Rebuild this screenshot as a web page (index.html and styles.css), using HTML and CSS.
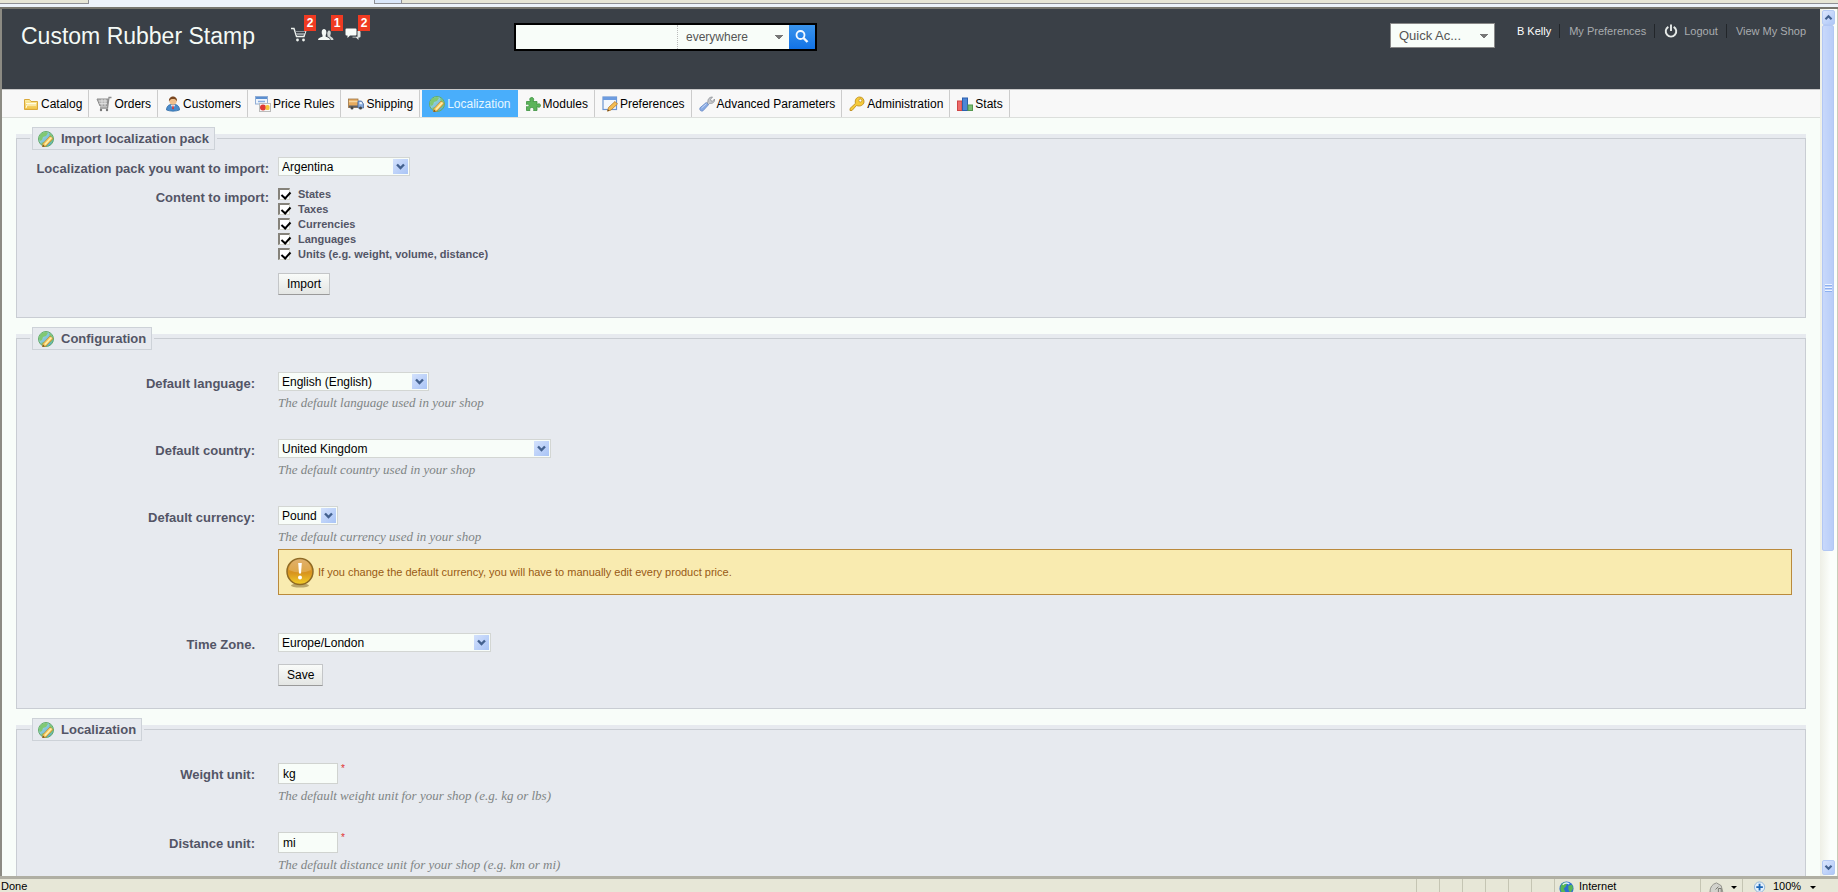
FILE: index.html
```html
<!DOCTYPE html>
<html lang="en">
<head>
<meta charset="utf-8">
<title>Localization - Custom Rubber Stamp</title>
<link rel="stylesheet" href="styles.css">
</head>
<body>
<svg class="sprite" aria-hidden="true">
  <defs>
    <linearGradient id="gGlobe" x1="0" y1="0" x2="1" y2="1"><stop offset="0" stop-color="#b4e2ea"/><stop offset="1" stop-color="#4aa3c4"/></linearGradient>
    <linearGradient id="gFolder" x1="0" y1="0" x2="0" y2="1"><stop offset="0" stop-color="#fdf0a8"/><stop offset="1" stop-color="#f0c040"/></linearGradient>
    <linearGradient id="gWarn" x1="0" y1="0" x2="0" y2="1"><stop offset="0" stop-color="#d9a04e"/><stop offset=".55" stop-color="#d8931d"/><stop offset="1" stop-color="#f3cf2a"/></linearGradient>
  </defs>
  <symbol id="globe" viewBox="0 0 16 16">
    <circle cx="8" cy="8" r="7.500" fill="url(#gGlobe)" stroke="#64ad68" stroke-width="1"/>
    <path d="M1 8C1 4 4 1 8 1l2 1-2 3-3 1-1 3-2 1zM11 2c2 1 4 3 4 6l-2 4-3-3 2-3zM3 12l3-1 2 4c-2 0-4-1-5-3z" fill="#80c872"/>
    <path d="M5 12.500l7-7.500 3 2.500-7 7.500-3.500 1z" fill="#f8cd60" stroke="#b9802c" stroke-width=".7"/>
    <path d="M7 13.500L13.500 6.500" stroke="#fff0b0" stroke-width="1.200"/><path d="M4.500 16l.7-2.300 1.600 1.500z" fill="#6b4a20"/>
  </symbol>
  <symbol id="folder" viewBox="0 0 16 16"><path d="M1.500 13.500v-10h5l1.500 2h6.500v8z" fill="url(#gFolder)" stroke="#d9a83a"/><path d="M3 7.500h10M3 12l1-3h9" stroke="#fffbe0" fill="none"/></symbol>
  <symbol id="cart" viewBox="0 0 16 16"><path d="M1 3h11l-1 7H4z" fill="#b5b5b5" stroke="#8a8a8a"/><path d="M15.500 1.500H13L11.500 12H4" fill="none" stroke="#8d8d8d" stroke-width="1.300"/><path d="M3 5h8M3.500 7.500h7.500M6 3v7M9 3v7" stroke="#e4e4e4" stroke-width=".8"/><circle cx="5" cy="14" r="1.200" fill="#777"/><circle cx="11" cy="14" r="1.200" fill="#777"/></symbol>
  <symbol id="person" viewBox="0 0 16 16"><path d="M1.500 14c0-3 1.500-5 4-5.500h5c2.500.5 4 2.500 4 5.500-4 1.500-9 1.500-13 0z" fill="#4a8ccc" stroke="#2f6aa5" stroke-width=".8"/><path d="M6 9l2 4 2-4z" fill="#fff"/><path d="M7.500 9.500h1l.5 3-1 1-1-1z" fill="#c33"/><circle cx="8" cy="5" r="3.700" fill="#f1c08c"/><path d="M4 5.500C3.500 2 6 .5 8 .5s4.500 1.500 4 5c-1-2-2-2.500-4-2.500S5 3.500 4 5.500z" fill="#7a4720"/></symbol>
  <symbol id="price" viewBox="0 0 16 16"><rect x=".5" y=".5" width="12" height="7.500" fill="#f0f5fb" stroke="#91aed6"/><rect x="1" y="1" width="11" height="2" fill="#5b8fd0"/><path d="M3 5.500h7" stroke="#8aaee0" stroke-width="1.500"/><rect x="4.500" y="7.500" width="11" height="8" fill="#f7f7f7" stroke="#bbb"/><circle cx="8" cy="11.500" r="3" fill="#e03a35"/><rect x="10.500" y="9" width="4" height="5" rx="1.500" fill="#f5c53a"/></symbol>
  <symbol id="truck" viewBox="0 0 16 16"><rect x=".5" y="3" width="9.500" height="8.500" fill="#e8ab5e" stroke="#9b7445" stroke-width=".8"/><path d="M1 5.500h9" stroke="#f6d6a0" stroke-width="1.500"/><path d="M1 9.500h9v2H1z" fill="#5d5f66"/><path d="M10 5h3.500l2 3v4H10z" fill="#85a9dc" stroke="#4c6c9e" stroke-width=".8"/><path d="M11.500 6h2l1 2.300h-3z" fill="#e9f2fc"/><circle cx="4" cy="12" r="1.500" fill="#444"/><circle cx="12.500" cy="12" r="1.500" fill="#444"/></symbol>
  <symbol id="puzzle" viewBox="0 0 16 16"><path d="M1.500 5.500h4C4 3 5 1.500 6.700 1.500S9.500 3 8 5.500h4v3c2-1.500 3.500-.5 3.500 1s-1.500 2.500-3.500 1v4H8.500c1-2-.3-3-1.800-3s-2.500 1-1.700 3H1.500v-4c2 .8 2.500-.5 2.500-1.300S3 7.800 1.500 8.500z" fill="#5bb45a" stroke="#3d9140" stroke-width=".8"/></symbol>
  <symbol id="prefs" viewBox="0 0 16 16"><rect x="1" y="1" width="13.500" height="12.500" fill="#f3f7fd" stroke="#6d95d1" stroke-width="1.200"/><path d="M1 1h13.500v3H1z" fill="#6d9ce0"/><path d="M5.500 15.200l1-3.700 6.500-6 2.500 2.500-6.500 6z" fill="#f4bc51" stroke="#b4782a" stroke-width=".8"/><path d="M5.500 15.200l.5-1.800 1.300 1.200z" fill="#5c3a16"/></symbol>
  <symbol id="wrench" viewBox="0 0 16 16"><path d="M9 6c-.5-3 1.500-5 4.500-5L11.500 3.300l.5 1.500 1.500.5L15.500 3c.5 3-2 5-4.800 4.300L9.500 8.500 7.800 6.800z" fill="#c7c9cd" stroke="#8c8f95" stroke-width=".8"/><path d="M7.300 6.500l2.200 2.300L4 14.800c-1.800 1-4-.8-3-3z" fill="#89abe4" stroke="#6586c4" stroke-width=".8"/><path d="M2.500 12l5-4.300" stroke="#c6d8f7"/></symbol>
  <symbol id="key" viewBox="0 0 16 16"><path d="M7.500 9.500l-4.500 5H1v-2l5.500-5.200C5.500 4 7.500 1 10.500 1S15.200 3.200 15 6s-3.500 5-7.500 3.500z" fill="#f5ca3a" stroke="#bf9020" stroke-width=".9"/><circle cx="11.300" cy="4.500" r="1.500" fill="#fff" stroke="#bf9020" stroke-width=".8"/></symbol>
  <symbol id="stats" viewBox="0 0 16 16"><rect x=".5" y="5" width="4.500" height="9.500" fill="#ec6a6a" stroke="#cf4545"/><rect x="5.500" y="2" width="5" height="12.500" fill="#4e86d6" stroke="#2c60ae"/><rect x="11" y="9" width="4.500" height="5.500" fill="#7bc074" stroke="#55984f"/></symbol>
  <symbol id="chev" viewBox="0 0 15 15"><path d="M4 5.500l3.500 3.500L11 5.500" fill="none" stroke="#43618f" stroke-width="2.400"/></symbol>
</svg>

<div class="tabstrip"><span class="tab tab-first"></span><span class="tab-gap"></span><span class="tab-active"></span><span class="tab tab-rest"></span></div>

<div class="window">
  <div class="page">
    <header class="header">
      <h1 class="shop-name">Custom Rubber Stamp</h1>
      <div class="notifs">
        <button class="notif" type="button" aria-label="New orders"><svg viewBox="0 0 16 16"><path d="M0 1.500h3l2.500 8H13l2-6.500" fill="none" stroke="#eef2ef" stroke-width="1.400"/><path d="M4.500 4h10L13 8H5.500z" fill="#8f959a"/><path d="M5 5.500h9" stroke="#3a4047"/><circle cx="6.500" cy="13" r="1.400" fill="#eef2ef"/><circle cx="12.500" cy="13" r="1.400" fill="#eef2ef"/></svg><span class="badge">2</span></button>
        <button class="notif" type="button" aria-label="New customers"><svg viewBox="0 0 16 16"><path d="M0 13c0-2 2-2.500 4.500-3.300V8C3.200 6 3.500 2 6 2s3 4 1.700 6v1.700C10 10.500 12 11 12 13z" fill="#f4f8f5"/><path d="M9.500 8.500C9 6 9.500 3.500 11.200 3.500s2 3 1 5.200c0 1.300 3.300 1.300 3.300 4.300h-2.800c0-2-1.700-3-3.200-3.500z" fill="#d5dad8"/></svg><span class="badge">1</span></button>
        <button class="notif" type="button" aria-label="New messages"><svg viewBox="0 0 16 16"><path d="M1.500 1.500h9q1 0 1 1v5q0 1-1 1H5L2.500 11V8.500h-1q-1 0-1-1v-5q0-1 1-1z" fill="#f8fcf9"/><path d="M12.500 4h2q1 0 1 1v4.500q0 1-1 1h-1V13l-2.500-2.500H7.500V9.700h5z" fill="#e2e6e4"/></svg><span class="badge">2</span></button>
      </div>
      <form class="search">
        <input class="search-text" type="text" aria-label="Search">
        <select class="search-scope" aria-label="Search in"><option>everywhere</option></select>
        <button class="search-go" type="button" aria-label="Search"><svg viewBox="0 0 16 16"><circle cx="6.500" cy="6" r="4" fill="none" stroke="#f4faff" stroke-width="1.800"/><path d="M9.500 9l4 4" stroke="#f4faff" stroke-width="2.400"/></svg></button>
      </form>
      <select class="quick" aria-label="Quick Access"><option>Quick Ac...</option></select>
      <nav class="user">
        <span class="user-name">B Kelly</span>
        <a href="#">My Preferences</a>
        <a href="#"><svg class="power" viewBox="0 0 16 16"><path d="M5 3.200a6 6 0 1 0 6 0" fill="none" stroke="#e6eae8" stroke-width="2.200"/><path d="M8 .5V8" stroke="#e6eae8" stroke-width="2.200"/></svg>Logout</a>
        <a href="#">View My Shop</a>
      </nav>
    </header>

    <nav class="menu">
      <a href="#"><svg><use href="#folder"/></svg>Catalog</a>
      <a href="#"><svg><use href="#cart"/></svg>Orders</a>
      <a href="#"><svg><use href="#person"/></svg>Customers</a>
      <a href="#"><svg><use href="#price"/></svg>Price Rules</a>
      <a href="#"><svg><use href="#truck"/></svg>Shipping</a>
      <a href="#" class="current"><svg><use href="#globe"/></svg>Localization</a>
      <a href="#"><svg><use href="#puzzle"/></svg>Modules</a>
      <a href="#"><svg><use href="#prefs"/></svg>Preferences</a>
      <a href="#"><svg><use href="#wrench"/></svg>Advanced Parameters</a>
      <a href="#"><svg><use href="#key"/></svg>Administration</a>
      <a href="#"><svg><use href="#stats"/></svg>Stats</a>
    </nav>

    <main class="content">
      <fieldset class="panel panel-tight">
        <legend><span class="legend"><svg><use href="#globe"/></svg>Import localization pack</span></legend>
        <div class="row">
          <label class="label" for="pack">Localization pack you want to import:</label>
          <div class="field"><span class="drop drop-pack"><select id="pack"><option>Argentina</option></select><svg><use href="#chev"/></svg></span></div>
        </div>
        <div class="row">
          <span class="label" id="content-label">Content to import:</span>
          <div class="field checks" role="group" aria-labelledby="content-label">
            <label class="check"><input type="checkbox" checked>States</label>
            <label class="check"><input type="checkbox" checked>Taxes</label>
            <label class="check"><input type="checkbox" checked>Currencies</label>
            <label class="check"><input type="checkbox" checked>Languages</label>
            <label class="check"><input type="checkbox" checked>Units (e.g. weight, volume, distance)</label>
          </div>
        </div>
        <div class="actions"><button class="btn" type="button">Import</button></div>
      </fieldset>

      <fieldset class="panel">
        <legend><span class="legend"><svg><use href="#globe"/></svg>Configuration</span></legend>
        <div class="row">
          <label class="label" for="lang">Default language:</label>
          <div class="field"><span class="drop drop-lang"><select id="lang"><option>English (English)</option></select><svg><use href="#chev"/></svg></span><p class="help">The default language used in your shop</p></div>
        </div>
        <div class="row">
          <label class="label" for="country">Default country:</label>
          <div class="field"><span class="drop drop-country"><select id="country"><option>United Kingdom</option></select><svg><use href="#chev"/></svg></span><p class="help">The default country used in your shop</p></div>
        </div>
        <div class="row">
          <label class="label" for="currency">Default currency:</label>
          <div class="field"><span class="drop drop-currency"><select id="currency"><option>Pound</option></select><svg><use href="#chev"/></svg></span><p class="help">The default currency used in your shop</p>
            <div class="warn"><svg viewBox="0 0 28 32"><ellipse cx="14" cy="29.500" rx="9" ry="2" fill="#b9a66c"/><circle cx="14" cy="15.500" r="13" fill="url(#gWarn)" stroke="#8f6a25" stroke-width="1.500"/><path d="M3 14a11 11 0 0 1 22 0q-11 5-22 0z" fill="#fff" opacity=".18"/><path d="M12.200 7h3.600l-.8 10.500h-2z" fill="#fff"/><circle cx="14" cy="21.500" r="2" fill="#fff"/></svg>If you change the default currency, you will have to manually edit every product price.</div>
          </div>
        </div>
        <div class="row">
          <label class="label" for="tz">Time Zone.</label>
          <div class="field"><span class="drop drop-tz"><select id="tz"><option>Europe/London</option></select><svg><use href="#chev"/></svg></span></div>
        </div>
        <div class="actions"><button class="btn" type="button">Save</button></div>
      </fieldset>

      <fieldset class="panel">
        <legend><span class="legend"><svg><use href="#globe"/></svg>Localization</span></legend>
        <div class="row">
          <label class="label" for="weight">Weight unit:</label>
          <div class="field"><div class="unit"><input id="weight" type="text" value="kg"><sup>*</sup></div><p class="help">The default weight unit for your shop (e.g. kg or lbs)</p></div>
        </div>
        <div class="row">
          <label class="label" for="distance">Distance unit:</label>
          <div class="field"><div class="unit"><input id="distance" type="text" value="mi"><sup>*</sup></div><p class="help">The default distance unit for your shop (e.g. km or mi)</p></div>
        </div>
      </fieldset>
    </main>
  </div>
  <div class="scroll">
    <button class="scroll-btn up" type="button" aria-label="Scroll up"><svg><use href="#chev"/></svg></button>
    <div class="scroll-track"><div class="thumb"><span class="grip"></span></div></div>
    <button class="scroll-btn" type="button" aria-label="Scroll down"><svg><use href="#chev"/></svg></button>
  </div>
</div>

<footer class="status">
  <span class="status-text">Done</span>
  <span class="cell"></span><span class="cell"></span><span class="cell"></span><span class="cell"></span><span class="cell"></span><span class="cell"></span>
  <span class="cell cell-zone"><svg viewBox="0 0 16 16"><circle cx="8" cy="8" r="7.500" fill="#2b6fd0"/><path d="M2 5c2-4 5-4 7-3L7 6 5 8l2 4-2 2C1 11 1 8 2 5zM10 5l4-1 1 4-3 5-2-4z" fill="#58b653"/><path d="M4 4q3-3 7-1" stroke="#dff0ff" stroke-width="1.500" fill="none"/></svg>Internet</span>
  <span class="cell cell-priv"><svg viewBox="0 0 16 16"><path d="M1 12q0-8 7-10l5 3 2 8H8z" fill="#d2d2cc" stroke="#8f8f88"/><path d="M7 9l3-3M10 12V8h3v4" stroke="#77776f" fill="none"/></svg><span class="caret"></span></span>
  <span class="cell cell-zoom"><svg viewBox="0 0 16 16"><circle cx="7" cy="6.500" r="5.500" fill="#e4f0fb" stroke="#8fb4d8"/><path d="M7 3v7M3.500 6.500h7" stroke="#1c67b8" stroke-width="2"/></svg>100%<span class="caret"></span></span>
</footer>
</body>
</html>
```
FILE: styles.css
```css
* { box-sizing: border-box; }

body {
  margin: 0;
  height: 100vh;
  display: flex;
  flex-direction: column;
  overflow: hidden;
  background: #f8fdf9;
  font-family: "Liberation Sans", Arial, sans-serif;
  font-size: 12px;
  color: #000;
}

button, input, select { font: inherit; color: inherit; margin: 0; border-radius: 0; }
a { color: inherit; text-decoration: none; }
.sprite { position: absolute; width: 0; height: 0; }

/* Browser tab strip */
.tabstrip {
  flex: none;
  display: flex;
  height: 9px;
  padding-bottom: 3px;
  background: #edf3fa;
  border-bottom: 2px solid #77766e;
}
.tab { background: #e7e6d6; border-bottom: 1px solid #8f9095; }
.tab-first { width: 89px; border-right: 1px solid #8f9095; }
.tab-gap { width: 285px; }
.tab-active { width: 28px; background: #dbe8fa; border: solid #8f9095; border-width: 0 1px 1px; }
.tab-rest { flex: 1; }

.window { flex: 1; min-height: 0; display: flex; border-left: 2px solid #8c8b83; }
.page { flex: 1; min-width: 0; overflow: hidden; }

/* Shop header */
.header {
  display: flex;
  align-items: flex-start;
  height: 80px;
  padding: 14px 14px 0 19px;
  background: #3a4047;
  color: #f4faf6;
}
.shop-name { margin: 0; width: 270px; font-size: 23px; line-height: 26px; font-weight: normal; white-space: nowrap; }
.notifs { display: flex; gap: 11px; padding-top: 4px; width: 223px; }
.notif { position: relative; width: 16px; height: 16px; padding: 0; border: 0; background: none; }
.notif svg { display: block; width: 16px; height: 16px; }
.badge {
  position: absolute;
  left: 13px;
  top: -12px;
  width: 12px;
  height: 16px;
  background: #f03a22;
  color: #fff;
  font-size: 12px;
  font-weight: bold;
  line-height: 16px;
  text-align: center;
}
.search { display: flex; width: 303px; height: 28px; border: 2px solid #000; background: #f8fdf9; }
.search-text { flex: 1; min-width: 0; border: 0; background: none; outline: 0; }
.search-scope, .quick {
  appearance: none;
  color: #555;
  background-color: #f8fdf9;
  background-image: linear-gradient(to bottom left, #777 50%, #f8fdf9 52%), linear-gradient(to bottom right, #777 50%, #f8fdf9 52%);
  background-repeat: no-repeat;
  background-position: right 10px center, right 6px center;
  background-size: 4px 4px;
}
.search-scope { width: 112px; padding: 0 8px; border: 0; border-left: 1px dotted #bbb; }
.quick { width: 105px; height: 25px; margin-left: auto; padding: 0 8px; border: 1px solid #888; font-size: 13px; }
.search-go { width: 26px; padding: 0; border: 0; background: linear-gradient(#3a94ec, #1273e6); }
.search-go svg { display: block; width: 16px; height: 16px; margin: 0 auto; }
.user { display: flex; padding: 1px 0 0 7px; font-size: 11px; line-height: 14px; color: #a9acaf; white-space: nowrap; }
.user > * { display: flex; align-items: center; padding-left: 15px; }
.user > * + * { margin-left: 8px; padding-left: 9px; border-left: 1px solid #22262a; }
.user-name { color: #fff; }
.power { width: 14px; height: 14px; margin-right: 6px; }

/* Main menu */
.menu { display: flex; height: 29px; padding-left: 14px; background: #f8f8f8; border: solid #dcdfdc; border-width: 1px 0; border-top-color: #c9c9c9; }
.menu a { display: flex; align-items: center; gap: 2px; padding: 1px 6px 0 7px; border-right: 1px solid #ccc; white-space: nowrap; }
.menu svg, .legend svg { width: 16px; height: 16px; }
.menu .current { margin-left: 2px; background: #49aefb; color: #e6f7ff; border-color: #49aefb; }

/* Panels */
.content { padding: 9px 14px; display: flex; flex-direction: column; gap: 9px; }
.panel {
  min-width: 0;
  margin: 0;
  padding: 22px 13px 22px 1px;
  border: 1px solid #c9cdd3;
  background: #e7eaef;
  box-shadow: 0 -4px #e7eaef;
}
.panel-tight { padding-top: 7px; }
.panel > legend { margin-left: 12px; padding: 0 2px; }
.legend {
  display: flex;
  align-items: center;
  gap: 7px;
  height: 23px;
  padding: 0 5px;
  border: 1px solid #cdd2d8;
  background: #e7eaef;
  font-size: 13px;
  font-weight: bold;
  color: #535566;
}
.row { display: grid; grid-template-columns: 237px minmax(0, 1fr); column-gap: 23px; margin-bottom: 28px; }
.panel-tight .row { grid-template-columns: 251px minmax(0, 1fr); column-gap: 9px; margin-bottom: 9px; }
.label { padding-top: 4px; font-size: 13px; line-height: 16px; font-weight: bold; text-align: right; color: #535566; }
.row:has(+ .actions) { margin-bottom: 11px; }
.panel-tight .row:has(+ .actions) { margin-bottom: 12px; }

.drop { position: relative; display: block; height: 19px; max-width: 100%; }
.drop select { appearance: none; display: block; width: 100%; height: 100%; padding: 0 16px 0 3px; border: 1px solid #d3d6d3; background: #f8fdf9; }
.drop svg { position: absolute; top: 2px; right: 2px; width: 15px; height: 15px; background: linear-gradient(135deg, #d3e1fc, #a9c4f6); pointer-events: none; }
.drop-pack { width: 132px; }
.drop-lang { width: 151px; }
.drop-country { width: 273px; }
.drop-currency { width: 60px; }
.drop-tz { width: 213px; }

.check { display: flex; align-items: center; gap: 8px; height: 15px; font-size: 11px; font-weight: bold; color: #535566; }
.check input {
  appearance: none;
  width: 12px;
  height: 12px;
  border: solid #d9d9cf;
  border-width: 2px 1px 1px 2px;
  border-top-color: #85827a;
  border-left-color: #85827a;
  background: #fff;
}
.check input:checked::before { content: ""; display: block; width: 4px; height: 7px; margin-left: 3px; border: solid #000; border-width: 0 2px 2px 0; rotate: 42deg; }

.actions { padding-left: 260px; }
.btn { display: block; height: 22px; padding: 0 8px; border: 1px solid #c4c6c8; border-bottom-color: #9a9a9a; background: linear-gradient(#f9fbf9, #e4e6e4); }
.help { margin: 4px 0 0; font: italic 13px/16px "Liberation Serif", Georgia, serif; color: #7f8585; }
.warn {
  display: flex;
  align-items: center;
  gap: 4px;
  min-height: 46px;
  margin: 4px 0 10px;
  padding: 0 7px;
  border: 1px solid #ba8a3c;
  background: #f9ebb0;
  font-size: 11px;
  color: #985a14;
}
.warn svg { width: 28px; height: 32px; }
.unit { display: flex; gap: 3px; height: 21px; }
.unit input { width: 60px; padding: 0 4px; border: 1px solid #d0d3d0; background: #f8fdf9; }
.unit sup { font-size: 10px; line-height: 12px; color: #e03030; }

/* Scroll bar */
.scroll { flex: none; width: 18px; display: flex; flex-direction: column; padding: 1px 3px 1px 2px; background: linear-gradient(90deg, #eeefe6, #fbfefb 60%); border-right: 1px solid #c9cdb9; }
.scroll-btn { width: 13px; height: 15px; padding: 0; border: 1px solid #b5caf3; border-radius: 2px; background: linear-gradient(135deg, #dbe6fd, #adc6f7); }
.scroll-btn svg { display: block; width: 13px; height: 13px; margin-left: -1px; }
.up svg { rotate: 180deg; }
.scroll-track { flex: 1; }
.thumb { display: flex; align-items: center; justify-content: center; height: 63%; border: 1px solid #b2c7f4; border-radius: 2px; background: linear-gradient(90deg, #c8d8fb, #b8cdf8); }
.grip { width: 7px; height: 8px; background: repeating-linear-gradient(#eef4fe 0 1px, #8cb0f0 1px 2px, #bdd0f9 2px 3px); }

/* Status bar */
.status { flex: none; display: flex; height: 16px; overflow: hidden; background: #e7e7d7; border-top: 3px solid #b0afa3; font-size: 11px; line-height: 11px; }
.status-text { flex: 1; padding: 2px 1px 0; }
.cell { flex: none; display: flex; align-items: flex-start; gap: 5px; width: 23px; padding-top: 2px; border-left: 1px solid #c5c5b3; }
.cell svg { flex: none; width: 15px; height: 15px; }
.cell-zone { width: 146px; padding-left: 4px; }
.cell-priv { width: 42px; padding-left: 8px; }
.cell-zoom { width: 96px; padding-left: 10px; }
.caret { margin: 5px 0 0 auto; border: 3px solid transparent; border-top-color: #000; border-bottom: 0; }
.cell-zoom .caret { margin-right: 22px; }
.cell-priv .caret { margin-right: 5px; }
```
